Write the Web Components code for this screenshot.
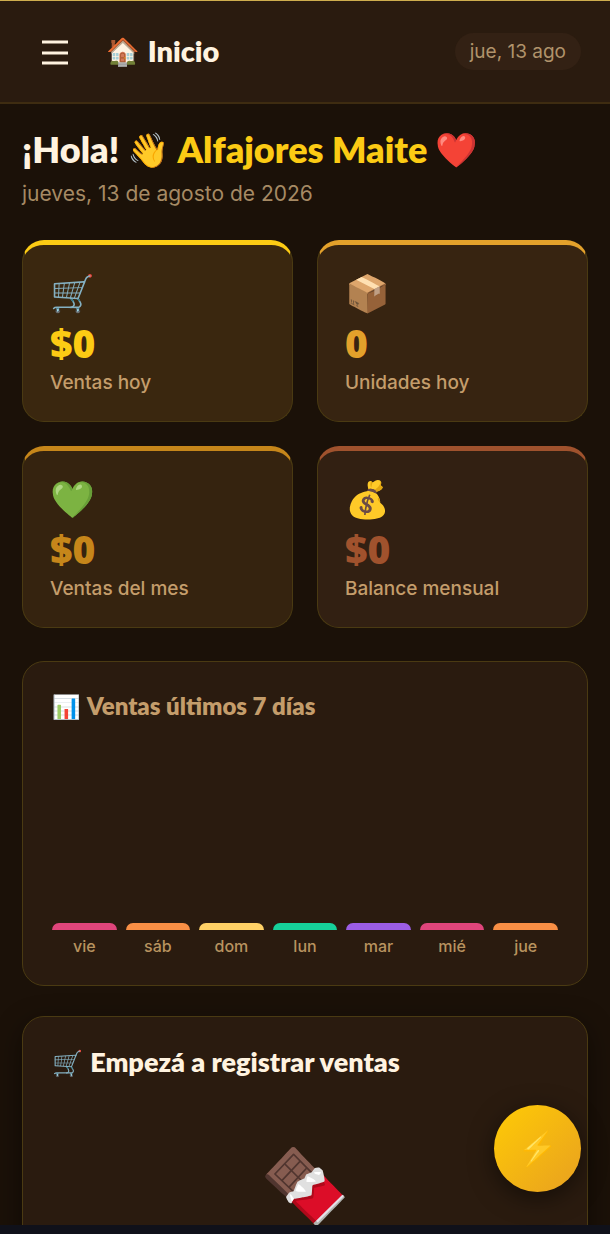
<!DOCTYPE html>
<html lang="es">
<head>
<meta charset="utf-8">
<meta name="viewport" content="width=device-width, initial-scale=1">
<title>Inicio</title>
<style>
  :root {
    --display: Lato, "Noto Color Emoji", sans-serif;
    --figures: "Open Sans", sans-serif;
    --cream: #fff3e0;
    --tan: #c49d6b;
    --muted: #a68a64;
    --line: #4a3a12;
    --surface: #2a1b0f;
  }
  body {
    margin: 0;
    background: #1b1108;
    color: var(--cream);
    font-family: Inter, "Noto Color Emoji", sans-serif;
    font-variant-ligatures: none;
  }
</style>
</head>
<body>
<sales-app>
  <app-header slot="header" emoji="🏠" date="jue, 13 ago">Inicio</app-header>
  <app-greeting date="jueves, 13 de agosto de 2026">Alfajores Maite</app-greeting>
  <stat-grid>
    <stat-card emoji="🛒" value="$0" style="--accent:#fccb14;--fill:#3a270f">Ventas hoy</stat-card>
    <stat-card emoji="📦" value="0" style="--accent:#e3a12b;--fill:#372411">Unidades hoy</stat-card>
    <stat-card emoji="💚" value="$0" style="--accent:#c6861a;--fill:#35230f">Ventas del mes</stat-card>
    <stat-card emoji="💰" value="$0" style="--accent:#a0522d;--fill:#322012">Balance mensual</stat-card>
  </stat-grid>
  <panel-card emoji="📊" subtle>
    <span slot="title">Ventas últimos 7 días</span>
    <week-chart></week-chart>
  </panel-card>
  <panel-card emoji="🛒" raised>
    <span slot="title">Empezá a registrar ventas</span>
    <empty-state>🍫</empty-state>
  </panel-card>
  <quick-button slot="fab"></quick-button>
</sales-app>

<script>
  class BaseElement extends HTMLElement {
    connectedCallback() {
      if (!this.shadowRoot) this.attachShadow({ mode: "open" }).innerHTML = this.template();
    }
    attr(name) { return this.getAttribute(name) || ""; }
  }

  customElements.define("sales-app", class extends BaseElement {
    template() {
      return `<style>
        :host { display: flex; flex-direction: column; height: 100vh; }
        main { flex: 1; min-height: 0; overflow: hidden; padding: 23px 22px 0; }
        .system { height: 9px; background: #10111a; flex: none; }
      </style>
      <slot name="header"></slot>
      <main><slot></slot></main>
      <div class="system"></div>
      <slot name="fab"></slot>`;
    }
  });

  customElements.define("app-header", class extends BaseElement {
    template() {
      return `<style>
        :host { display: block; flex: none; }
        header { display: flex; align-items: center; gap: 24px; padding: 24px 29px 24px 28px;
          border-top: 1px solid #cfae4e; border-bottom: 2px solid #3e2c11; background: var(--surface); }
        button { display: grid; place-items: center; width: 54px; height: 53px; padding: 0;
          border: 0; background: none; color: var(--cream); }
        h1 { display: flex; align-items: center; gap: 8px; flex: 1; margin: 0; padding-bottom: 2px;
          font: 800 29px/36px var(--display); }
        .emoji { font-size: 27px; }
        time { padding: 0 15px; border-radius: 19px; background: #332114; color: #b0936b;
          font-size: 19px; line-height: 37px; }
      </style>
      <header>
        <button aria-label="Menú"><svg width="26" height="26" viewBox="0 0 26 26" fill="none" stroke="currentColor" stroke-width="3"><path d="M0 3h26M0 14h26M0 24h26"/></svg></button>
        <h1><span class="emoji">${this.attr("emoji")}</span><slot></slot></h1>
        <time>${this.attr("date")}</time>
      </header>`;
    }
  });

  customElements.define("app-greeting", class extends BaseElement {
    template() {
      return `<style>
        :host { display: block; margin-bottom: 32px; }
        h2 { display: flex; align-items: center; gap: 8px; margin: 0 0 9px;
          font: 800 36px/44px var(--display); }
        .emoji { font-size: 34px; }
        .name { color: #fccb14; }
        p { margin: 0; color: var(--muted); font-size: 21px; line-height: 28px; }
      </style>
      <h2><span>¡Hola!</span><span class="emoji">👋</span><span class="name"><slot></slot></span><span class="emoji">❤️</span></h2>
      <p>${this.attr("date")}</p>`;
    }
  });

  customElements.define("stat-grid", class extends BaseElement {
    template() {
      return `<style>
        :host { display: grid; grid-template-columns: 1fr 1fr; gap: 24px; margin-bottom: 33px; }
      </style><slot></slot>`;
    }
  });

  customElements.define("stat-card", class extends BaseElement {
    template() {
      return `<style>
        :host { display: block; padding: 26px 27px; border: 1px solid var(--line);
          border-top: 5px solid var(--accent); border-radius: 22px; background: var(--fill); }
        .emoji { font-size: 36px; line-height: 44px; margin-bottom: 4px; }
        .value { color: var(--accent); font: 800 39px/48px var(--figures); margin-bottom: 4px; }
        .label { color: var(--tan); font-size: 19px; font-weight: 500; line-height: 24px; }
      </style>
      <div class="emoji">${this.attr("emoji")}</div>
      <div class="value">${this.attr("value")}</div>
      <div class="label"><slot></slot></div>`;
    }
  });

  customElements.define("panel-card", class extends BaseElement {
    template() {
      return `<style>
        :host { display: block; margin-bottom: 30px; padding: 29px 29px 27px;
          border: 1px solid var(--line); border-radius: 22px; background: var(--surface); }
        :host([raised]) { box-shadow: 0 8px 28px rgba(0, 0, 0, .45); }
        h3 { display: flex; align-items: center; gap: 7px; margin: 0 0 1px;
          font: 800 27px/32px var(--display); }
        .emoji { font-size: 25px; }
        :host([subtle]) h3 { gap: 6px; color: var(--tan); font-size: 24px; line-height: 30px; }
        :host([subtle]) .emoji { font-size: 23px; }
      </style>
      <h3><span class="emoji">${this.attr("emoji")}</span><slot name="title"></slot></h3>
      <slot></slot>`;
    }
  });

  customElements.define("week-chart", class extends BaseElement {
    template() {
      const days = [["vie", "#e0457b"], ["sáb", "#f98f45"], ["dom", "#ffd166"], ["lun", "#16d19a"],
        ["mar", "#9b5de5"], ["mié", "#e0457b"], ["jue", "#f98f45"]];
      return `<style>
        :host { display: grid; grid-template-columns: repeat(7, 1fr); gap: 9px; height: 236px; }
        .day { display: flex; flex-direction: column; justify-content: flex-end; }
        .bar { height: 7px; border-radius: 7px 7px 0 0; margin-bottom: 5px; }
        .name { color: #b8935f; font-size: 16px; font-weight: 500; line-height: 23px; text-align: center; }
      </style>` + days.map(([name, color]) =>
        `<div class="day"><div class="bar" style="background:${color}"></div><div class="name">${name}</div></div>`).join("");
    }
  });

  customElements.define("empty-state", class extends BaseElement {
    template() {
      return `<style>
        :host { display: block; padding: 62px 0; text-align: center; font-size: 72px; line-height: 88px; }
      </style><slot></slot>`;
    }
  });

  customElements.define("quick-button", class extends BaseElement {
    template() {
      return `<style>
        :host { position: fixed; right: 29px; bottom: 42px; }
        button { display: grid; place-items: center; width: 87px; height: 87px; padding: 0 0 3px; border: 0;
          border-radius: 50%; background: linear-gradient(135deg, #ffcb05, #e8a020);
          box-shadow: 0 6px 24px rgba(0, 0, 0, .5); font: 33px/40px var(--display); }
      </style>
      <button aria-label="Venta rápida">⚡</button>`;
    }
  });
</script>
</body>
</html>
